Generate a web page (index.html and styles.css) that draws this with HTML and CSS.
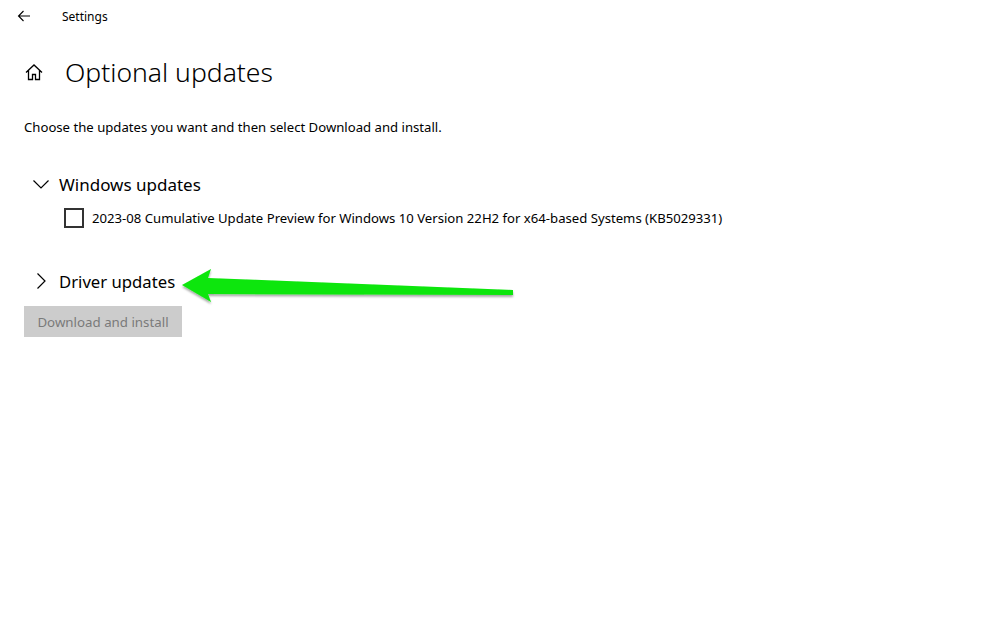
FILE: index.html
```html
<!DOCTYPE html>
<html>
<head>
<meta charset="utf-8">
<link rel="stylesheet" href="styles.css">
</head>
<body>
<div class="page">
  <header class="titlebar">
    <svg class="back" width="16" height="16" viewBox="0 0 16 16"><path d="M14 8H2.5M7.5 3L2.5 8l5 5" fill="none" stroke="#000" stroke-width="1.1"/></svg>
    <span class="app">Settings</span>
  </header>
  <div class="heading">
    <svg class="home" width="20" height="20" viewBox="0 0 20 20"><path d="M2 10.5L10 3l8 7.5M4.5 8.5V17.5h4v-5h3v5h4V8.5" fill="none" stroke="#000" stroke-width="1.3" stroke-linejoin="miter"/></svg>
    <h1>Optional updates</h1>
  </div>
  <p class="desc">Choose the updates you want and then select Download and install.</p>
  <section class="group">
    <div class="group-head">
      <svg class="chev" width="18" height="18" viewBox="0 0 18 18"><path d="M1.5 5.5L9 13l7.5-7.5" fill="none" stroke="#000" stroke-width="1.2"/></svg>
      <span>Windows updates</span>
    </div>
    <label class="item"><span class="box"></span><span>2023-08 Cumulative Update Preview for Windows 10 Version 22H2 for x64-based Systems (KB5029331)</span></label>
  </section>
  <section class="group driver">
    <div class="group-head">
      <svg class="chev" width="18" height="18" viewBox="0 0 18 18"><path d="M5.5 1.5L13 9l-7.5 7.5" fill="none" stroke="#000" stroke-width="1.2"/></svg>
      <span>Driver updates</span>
    </div>
  </section>
  <button class="btn">Download and install</button>
  <svg class="arrow" width="340" height="42" viewBox="0 0 340 42">
    <defs><filter id="sh" x="-10%" y="-50%" width="120%" height="200%"><feDropShadow dx="0" dy="2" stdDeviation="1.2" flood-color="#000" flood-opacity="0.35"/></filter></defs>
    <path d="M2 17 L31 1 L28 10 L333 22 L333 27 L28 26 L31 34 Z" fill="#0ce60c" filter="url(#sh)"/>
  </svg>
</div>
</body>
</html>
```
FILE: styles.css
```css
html, body { margin: 0; padding: 0; background: #fff; }
body { font-family: "Noto Sans", "Open Sans", sans-serif; color: #000; }
.page { position: relative; width: 983px; height: 624px; overflow: hidden; }
.titlebar { display: flex; align-items: center; height: 32px; padding-left: 16px; }
.back { margin-right: 30px; }
.app { font-size: 12px; }
.heading { display: flex; align-items: center; margin: 22px 0 0 24px; height: 36px; }
.home { margin-right: 21px; }
h1 { margin: 0; font-weight: 300; font-size: 26.5px; }
.desc { margin: 28px 0 0 24px; font-size: 13.15px; }
.group { margin: 36px 0 0 32px; }
.group-head { display: flex; align-items: center; gap: 9px; font-size: 17px; height: 24px; }
.driver .group-head { font-size: 16.7px; }
.item { display: flex; align-items: center; margin: 11px 0 0 32px; font-size: 13.15px; height: 22px; }
.box { width: 16px; height: 16px; border: 2px solid #333; margin-right: 8px; }
.driver { margin-top: 40px; }
.btn { display: block; margin: 13px 0 0 24px; width: 158px; height: 31px; border: 0; background: #cccccc; color: #7a7a7a; font: 13.3px "Noto Sans", sans-serif; padding: 0; }
.arrow { position: absolute; left: 180px; top: 268px; }
```
